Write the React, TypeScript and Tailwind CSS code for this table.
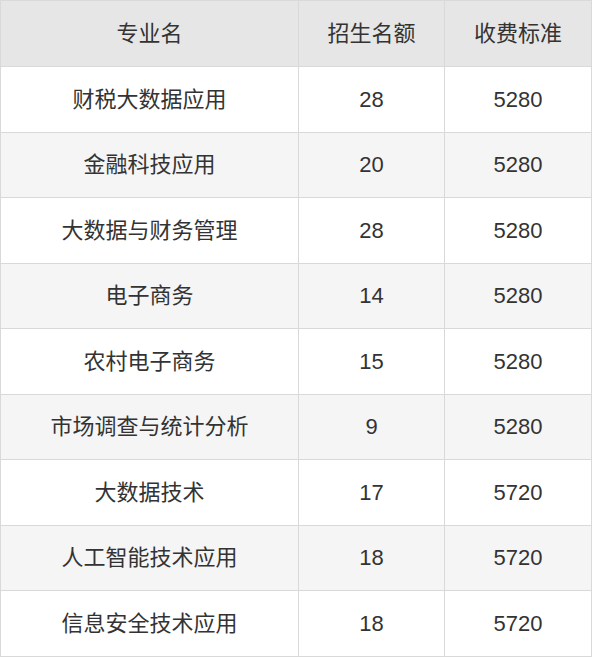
const rows = [
  ['财税大数据应用', '28', '5280'],
  ['金融科技应用', '20', '5280'],
  ['大数据与财务管理', '28', '5280'],
  ['电子商务', '14', '5280'],
  ['农村电子商务', '15', '5280'],
  ['市场调查与统计分析', '9', '5280'],
  ['大数据技术', '17', '5720'],
  ['人工智能技术应用', '18', '5720'],
  ['信息安全技术应用', '18', '5720'],
]

const font = { fontFamily: '"Liberation Sans", "Noto Sans CJK SC", sans-serif' }

export default function App() {
  return (
    <div className="w-[592px] h-[657px] bg-white text-[22px] text-[#333]" style={font}>
      <div className="border-t border-l border-[#d9d9d9]">
        <div className="grid grid-cols-[298px_146px_147px] h-[66px] bg-[#e6e6e6]">
          <div className="flex items-center justify-center border-r border-b border-[#d9d9d9]">专业名</div>
          <div className="flex items-center justify-center border-r border-b border-[#d9d9d9]">招生名额</div>
          <div className="flex items-center justify-center border-r border-b border-[#d9d9d9]">收费标准</div>
        </div>
        {rows.map((r, i) => (
          <div
            key={i}
            className={
              'grid grid-cols-[298px_146px_147px] h-[65.5px] ' + (i % 2 === 1 ? 'bg-[#f5f5f5]' : 'bg-white')
            }
          >
            <div className="flex items-center justify-center border-r border-b border-[#d9d9d9]">{r[0]}</div>
            <div className="flex items-center justify-center border-r border-b border-[#d9d9d9]">{r[1]}</div>
            <div className="flex items-center justify-center border-r border-b border-[#d9d9d9]">{r[2]}</div>
          </div>
        ))}
      </div>
    </div>
  )
}
